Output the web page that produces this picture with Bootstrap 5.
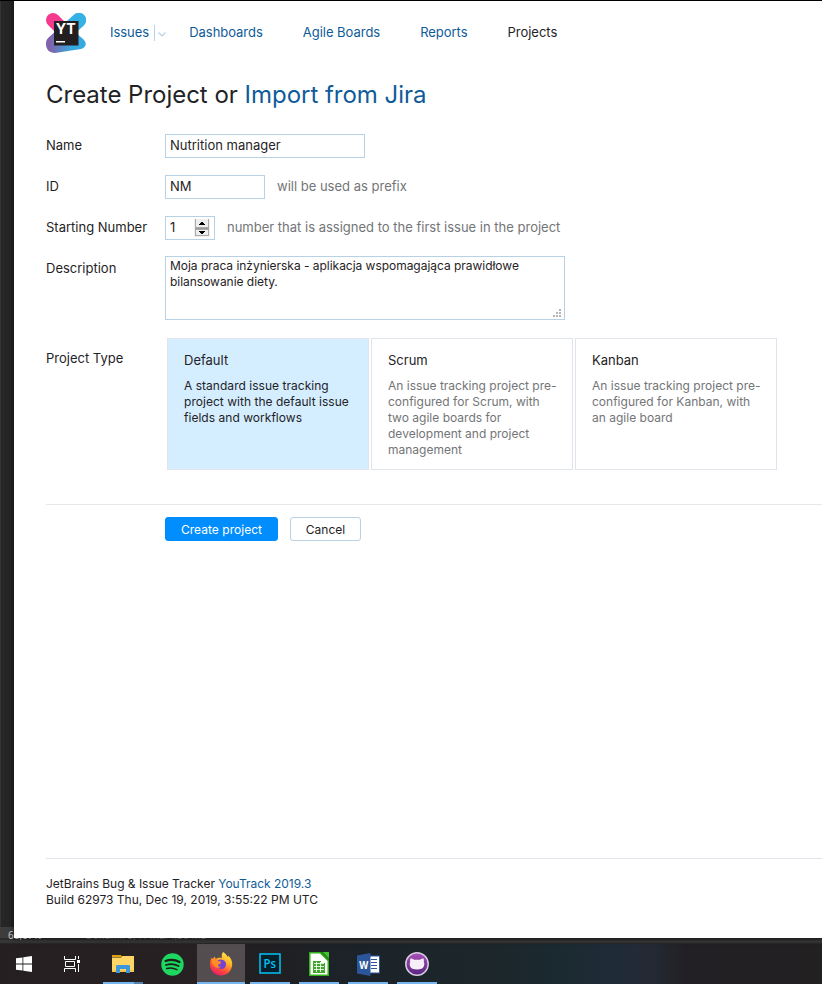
<!DOCTYPE html>
<html lang="en">
<head>
<meta charset="utf-8">
<meta name="viewport" content="width=device-width, initial-scale=1">
<title>Create Project</title>
<link href="https://cdn.jsdelivr.net/npm/bootstrap@5.3.0/dist/css/bootstrap.min.css" rel="stylesheet">
<style>
  body { font-family: Inter, "Open Sans", sans-serif; font-size: 13px; line-height: 16px; color: #1f2326; background: #262626; height: 984px; overflow: hidden; }
  a { color: #0f5b99; text-decoration: none; }
  .desktop { height: 984px; background: linear-gradient(90deg, #343434 0 1px, #262626 1px 9px, #202020 14px); border-top: 1px solid #000; }
  .app-window { margin-left: 14px; height: 937px; background: #fff; z-index: 1; box-shadow: 0 0 6px rgba(0,0,0,.55); padding-left: 32px; }
  .main-nav { padding-top: 12px; height: 52px; }
  .main-links { padding: 11px 0 0 24px; letter-spacing: -.03px; }
  .main-nav .nav-link { padding: 0; color: #0f5b99; line-height: 16px; margin-right: 40px; }
  .main-nav .nav-link.with-menu { margin-right: 0; }
  .main-nav .nav-link.active { color: #1f2326; }
  .divider { width: 1px; height: 16px; background: #b8d1e5; margin: 1px 3px 0 5px; }
  .menu-arrow { margin: 1px 22px 0 0; }
  .page-title { font-size: 24px; line-height: 30px; font-weight: 400; margin: 27px 0 0; letter-spacing: -.02px; }
  .form-line { display: grid; grid-template-columns: 119px 1fr; margin-bottom: 17px; }
  .form-line:nth-child(3) { margin-bottom: 16px; }
  .form-line:nth-child(4) { margin-bottom: 18px; }
  .fields { margin-top: 24px; }
  .field-label { line-height: 22px; }
  .field-label.low { line-height: 24px; }
  .hint { color: #737577; margin-left: 12px; line-height: 16px; padding-bottom: 2px; }
  .field { height: 24px; border: 1px solid #b8d1e5; border-radius: 0; padding: 0 4px 2px; font-size: 13px; line-height: 16px; color: #1f2326; }
  .w-name { width: 200px; } .w-id { width: 100px; } .w-num { width: 50px; padding: 0 4px; }
  .w-num span { padding-bottom: 2px; }
  .desc { width: 400px; height: 64px; padding: 1px 4px; font-size: 12px; letter-spacing: -.03px; }
  .grip { right: 3px; bottom: 2px; line-height: 0; }
  .types { gap: 2px; margin-left: 2px; }
  .type-card { width: 202px; height: 132px; border: 1px solid #dfe5eb; padding: 13px 12px 0 16px; font-size: 12px; color: #737577; }
  .type-card h2 { font-size: 13px; line-height: 16px; font-weight: 400; color: #1f2326; margin: 0 0 10px; }
  .type-card p { margin: 0; letter-spacing: .01px; }
  .type-card.selected { background: #d4edff; color: #1f2326; }
  .type-card.selected p { letter-spacing: .03px; }
  .actions { border-top: 1px solid #e5e7e9; margin-top: 34px; padding: 12px 0 0 119px; gap: 12px; }
  .actions .btn { width: 71px; height: 24px; font-size: 12px; letter-spacing: .03px; line-height: 16px; padding: 4px 0 2px; border-radius: 3px; border-color: #b8d1e5; color: #1f2326; }
  .actions .btn-primary { width: 113px; background: #008eff; border-color: #008eff; color: #fff; }
  .app-footer { border-top: 1px solid #dfe5eb; padding-top: 17px; height: 80px; font-size: 12px; }
  .product { letter-spacing: -.03px; }
  .status-strip { height: 17px; margin-top: -11px; background: linear-gradient(#3d3d3d 0 11px, #2b2b2b 11px 13px, #353535 13px 16px, #272727 16px); font: 10px/17px "Open Sans", sans-serif; color: #d8d8d8; padding-left: 8px; }
  .status-strip .dim { color: #747474; margin-left: 44px; }
  .taskbar { height: 40px; background: linear-gradient(90deg, #251f22 0, #272124 190px, #211f22 270px, #1b2329 350px, #1c262b 480px, #1b2930 560px, #202b38 620px, #242a34 650px, #222024 685px, #222021 822px); }
  .task { width: 48px; height: 40px; margin-right: 1px; }
  .task.plain { margin-right: 0; }
  .task.plain + .task:not(.plain) { margin-left: 3px; }
  .task.open::after { content: ""; width: 40px; height: 2px; background: #76b5ed; position: absolute; bottom: 0; left: 4px; }
  .task.multi::after { background: linear-gradient(90deg, #76b5ed 31px, #5483ac 31px); }
  .task.current { background: #534d50; }
  .task.current::after { width: 48px; left: 0; }
</style>
<script src="https://cdn.jsdelivr.net/npm/bootstrap@5.3.0/dist/js/bootstrap.bundle.min.js"></script>
</head>
<body>
<div class="desktop d-flex flex-column">
  <div class="app-window position-relative d-flex flex-column flex-shrink-0">
    <header class="main-nav d-flex">
      <svg width="40" height="40" viewBox="0 0 40 40" aria-label="YouTrack">
        <defs>
          <linearGradient id="lg1" x1="0" y1="1" x2="1" y2="0"><stop offset=".15" stop-color="#7866ad"/><stop offset=".65" stop-color="#35b1e6"/></linearGradient>
          <linearGradient id="lg2" x1="0" y1="0" x2="1" y2="0"><stop offset=".1" stop-color="#8063aa"/><stop offset=".65" stop-color="#35a9e0"/></linearGradient>
        </defs>
        <path d="M7 7L25 25" stroke="#f43a8e" stroke-width="14" stroke-linecap="round"/>
        <path d="M7.500 30L33 7" stroke="url(#lg1)" stroke-width="14.500" stroke-linecap="round"/>
        <path d="M4 24L22 13L37 26C41.500 30 40 35 35 36L9 40C3 40 0 36 0 31C0 28 1 26 4 24Z" fill="url(#lg2)"/>
        <path d="M8 8H32.500V32.500H8Z" fill="#231f20"/>
        <path d="M10 28H19V29.500H10Z" fill="#fff"/>
        <text x="9.800" y="21.300" font-family="Inter, sans-serif" font-weight="700" font-size="14" fill="#fff" textLength="20" lengthAdjust="spacingAndGlyphs">YT</text>
      </svg>
      <nav class="nav main-links flex-nowrap align-items-start">
        <a class="nav-link with-menu" href="#">Issues</a>
        <span class="divider"></span>
        <svg class="menu-arrow" width="9" height="16" viewBox="0 0 9 16" fill="none" stroke="#b8d1e5" stroke-width="1.200"><path d="M.500 7.500L4 11L7.500 7.500"/></svg>
        <a class="nav-link" href="#">Dashboards</a>
        <a class="nav-link" href="#">Agile Boards</a>
        <a class="nav-link" href="#">Reports</a>
        <a class="nav-link active" href="#">Projects</a>
      </nav>
    </header>
    <h1 class="page-title">Create Project or <a href="#">Import from Jira</a></h1>

    <form class="fields">
      <div class="form-line">
        <label class="field-label" for="name">Name</label>
        <div><input id="name" class="form-control field w-name" value="Nutrition manager"></div>
      </div>
      <div class="form-line">
        <label class="field-label" for="pid">ID</label>
        <div class="d-flex align-items-center"><input id="pid" class="form-control field w-id" value="NM"><span class="hint">will be used as prefix</span></div>
      </div>
      <div class="form-line">
        <span class="field-label">Starting Number</span>
        <div class="d-flex align-items-center">
          <div class="field w-num d-flex align-items-center justify-content-between"><span>1</span>
            <svg width="16" height="18" viewBox="0 0 16 18" shape-rendering="crispEdges"><path d="M0 0H16V18H0Z" fill="#f0f0f0"/><path d="M1.500 0V8.500H14.500V0M1.500 10.500V16.500H14.500V10.500Z" fill="#eee" stroke="#aaa"/><path d="M1 9.500H15" stroke="#999"/><path d="M7 3H9V4H10V5H11V6H5V5H6V4H7ZM5 12H11V13H10V14H9V15H7V14H6V13H5Z" fill="#000"/></svg>
          </div>
          <span class="hint">number that is assigned to the first issue in the project</span>
        </div>
      </div>
      <div class="form-line">
        <span class="field-label low">Description</span>
        <div class="field desc position-relative">Moja praca inżynierska - aplikacja wspomagająca prawidłowe<br>bilansowanie diety.
          <span class="grip position-absolute"><svg width="8" height="8" viewBox="0 0 8 8" fill="#b5b5b5"><path d="M6 0h2v2H6zM3 3h2v2H3zM6 3h2v2H6zM0 6h2v2H0zM3 6h2v2H3zM6 6h2v2H6z"/></svg></span>
        </div>
      </div>
      <div class="form-line">
        <span class="field-label low pt-2">Project Type</span>
        <div class="types d-flex">
          <section class="type-card selected"><h2>Default</h2><p>A standard issue tracking<br>project with the default issue<br>fields and workflows</p></section>
          <section class="type-card"><h2>Scrum</h2><p>An issue tracking project pre-<br>configured for Scrum, with<br>two agile boards for<br>development and project<br>management</p></section>
          <section class="type-card"><h2>Kanban</h2><p>An issue tracking project pre-<br>configured for Kanban, with<br>an agile board</p></section>
        </div>
      </div>
      <div class="actions d-flex">
        <button type="button" class="btn btn-primary">Create project</button>
        <button type="button" class="btn bg-white">Cancel</button>
      </div>
    </form>
    <footer class="app-footer mt-auto"><span class="product">JetBrains Bug &amp; Issue Tracker <a href="#">YouTrack 2019.3</a></span><br>Build 62973 Thu, Dec 19, 2019, 3:55:22 PM UTC</footer>
  </div>

  <div class="status-strip d-flex flex-shrink-0"><span>66,67%</span><span class="dim">Dokum.: 3,41 MB/4,30 MB</span></div>

  <nav class="taskbar d-flex flex-shrink-0">
    <div class="task plain d-flex align-items-center justify-content-center"><svg width="16" height="16" viewBox="0 0 16 16" fill="#fff"><path d="M0 2.300L6.500 1.400V7.500H0ZM7.300 1.200L16 0V7.500H7.300ZM0 8.400H6.500V14.600L0 13.700ZM7.300 8.400H16V16L7.300 14.800Z"/></svg></div>
    <div class="task plain d-flex align-items-center justify-content-center"><svg width="16" height="16" viewBox="0 0 16 16" fill="none" stroke="#fff"><path d="M.5 0V3.500H11.500V0M.5 16V12.500H11.500V16M1.500 5.500H10.500V10.500H1.500ZM14.500 0V3M14.500 8V16"/><path d="M13 4H16V7H13Z" fill="#fff" stroke="none"/></svg></div>
    <div class="task open multi position-relative d-flex align-items-center justify-content-center"><svg width="22" height="20" viewBox="0 0 22 20"><path d="M0 1H9L10 3H0Z" fill="#dfa006"/><path d="M0 3.500H9L10.500 2H22V18H0Z" fill="#ffd665"/><path d="M0 16H22V18H0Z" fill="#f6c64d"/><path d="M4 19V12Q4 11 5 11H17Q18 11 18 12V19H14V15H8V19Z" fill="#3d97dd"/></svg></div>
    <div class="task position-relative d-flex align-items-center justify-content-center"><svg width="23" height="23" viewBox="0 0 23 23"><circle cx="11.500" cy="11.500" r="11.200" fill="#1ed760"/><g fill="none" stroke="#182019" stroke-linecap="round"><path d="M4.500 8Q12 5.500 18.500 9" stroke-width="2.200"/><path d="M5 12Q11.500 10 17.500 13" stroke-width="1.800"/><path d="M5.700 15.500Q11 14 16 16.600" stroke-width="1.500"/></g></svg></div>
    <div class="task open current position-relative d-flex align-items-center justify-content-center"><svg width="24" height="24" viewBox="0 0 24 24"><defs><linearGradient id="ff" x1=".8" y1="0" x2=".3" y2="1"><stop offset="0" stop-color="#fff04a"/><stop offset=".4" stop-color="#ffad28"/><stop offset=".7" stop-color="#ff5035"/><stop offset="1" stop-color="#ed176f"/></linearGradient></defs><path d="M14 0C16 1 18 3 18.500 5C19 4.500 19 4 19 3.500C22 6 23.500 9 23.200 13C22.500 19.500 17.500 23.500 12 23.500C5 23.500 1 18 1 12C1 9 2 6.500 3 5.500L3.500 7L6 4.500L6.500 7C9 5.500 11 5.500 13 6C12.500 4 12.500 2 14 0Z" fill="url(#ff)"/><path d="M8 9C10 6.500 15 7 16.500 10C18 13.500 16 17 12.500 17C10 17 8 15.500 7.500 13L11.500 12Q12 10.500 8 9Z" fill="#7542d5"/><path d="M3 8C5 6 8 7 9 9L12 9.500C12 11 10.500 11.500 9.500 12C8 14 10 15 12 14.500C10 17 5 16 3 11Z" fill="#ff8d24"/></svg></div>
    <div class="task open position-relative d-flex align-items-center justify-content-center"><svg width="22" height="22" viewBox="0 0 22 22"><path d="M1 1H21V20H1Z" fill="#071e2b" stroke="#00c4f5" stroke-width="1.500"/><text x="4.500" y="15" font-family="Open Sans, sans-serif" font-weight="600" font-size="13" fill="#00c4f5" textLength="12.500" lengthAdjust="spacingAndGlyphs">Ps</text></svg></div>
    <div class="task open position-relative d-flex align-items-center justify-content-center"><svg width="20" height="24" viewBox="0 0 20 24"><path d="M0 0H12L20 8V24H0Z" fill="#2eb316"/><path d="M1.500 1.500H11L18.500 9V22.500H1.500Z" fill="#fff"/><path d="M11 0H20V9Z" fill="#238a13"/><path d="M14 0H20V6Z" fill="#43c330"/><path d="M4 9H12V11H16V21H4Z" fill="#43a52c"/><path d="M5 11.500H15M5 14.500H15M5 17.500H15M7.500 10V20M11.500 10V20" stroke="#fff" stroke-width=".8"/></svg></div>
    <div class="task open position-relative d-flex align-items-center justify-content-center"><svg width="23" height="23" viewBox="0 0 23 23"><path d="M11 3H22.500V20H11Z" fill="#fff" stroke="#2b579a"/><path d="M14 6.500H20M14 9.500H20M14 12.500H20M14 15.500H20" stroke="#2b579a" stroke-width="1.200"/><path d="M0 2.500L13.500 0V23L0 20.500Z" fill="#2b579a"/><text x="2.300" y="15.500" font-family="Open Sans, sans-serif" font-weight="700" font-size="11" fill="#fff" textLength="9" lengthAdjust="spacingAndGlyphs">W</text></svg></div>
    <div class="task open position-relative d-flex align-items-center justify-content-center"><svg width="24" height="24" viewBox="0 0 24 24"><defs><linearGradient id="gh" x2="0" y2="1"><stop stop-color="#ad50bb"/><stop offset="1" stop-color="#542482"/></linearGradient></defs><circle cx="12" cy="12" r="11.200" fill="url(#gh)" stroke="#d6cddd" stroke-width="1.500"/><path d="M5.500 6.500C7 6.300 8 7 9 7.800H15C16 7 17 6.300 18.500 6.500Q19.200 8 18.800 9.800C19.600 11.500 19.500 14 18 15.800Q16.500 17.500 12 17.500Q7.500 17.500 6 15.800C4.500 14 4.400 11.500 5.200 9.800Q4.800 8 5.500 6.500Z" fill="#f7eff7"/></svg></div>
  </nav>
</div>
</body>
</html>
